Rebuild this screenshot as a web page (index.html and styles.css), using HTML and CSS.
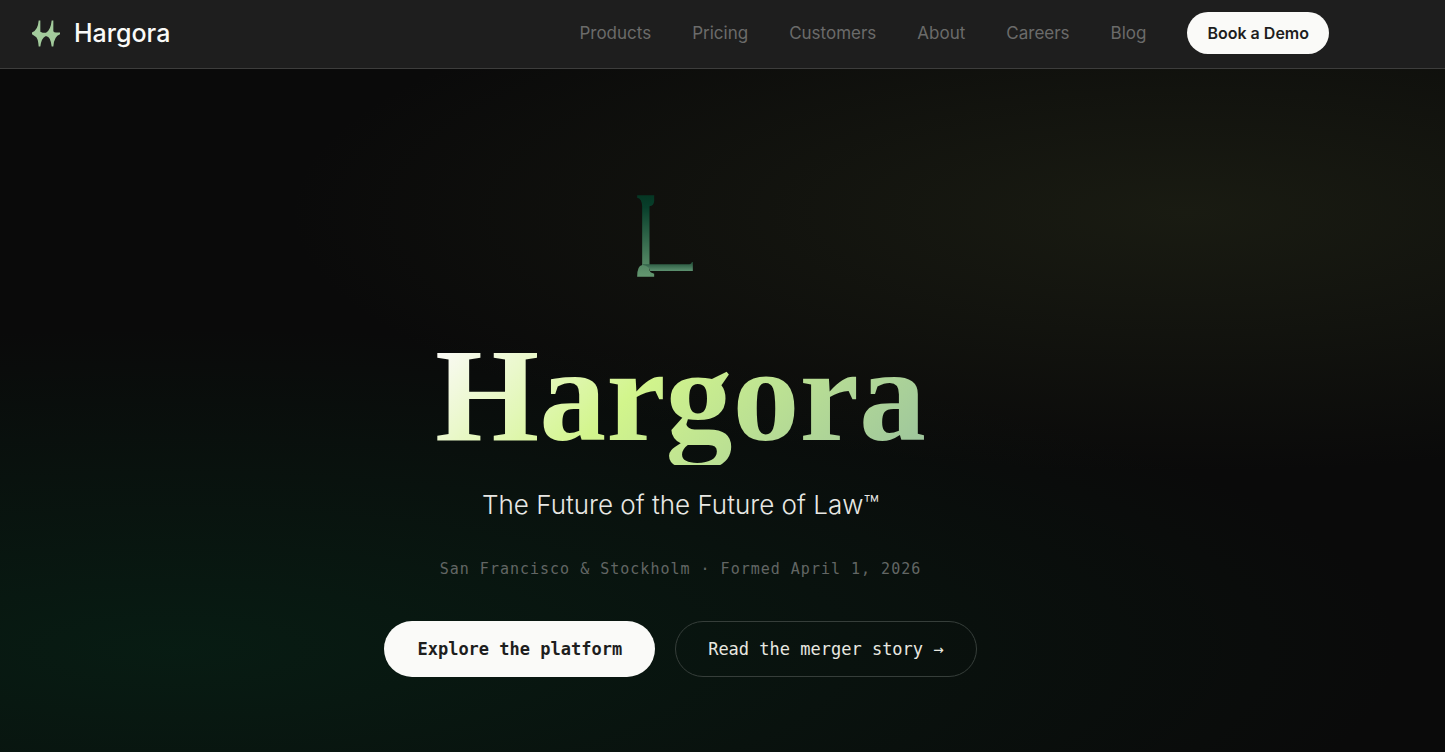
FILE: index.html
```html
<!DOCTYPE html>
<html lang="en">
<head>
    <meta charset="UTF-8">
    <meta name="viewport" content="width=device-width, initial-scale=1.0">
    <title>Hargora</title>
    <link rel="stylesheet" href="styles.css">
</head>
<body>
    <header class="header">
        <div class="header-inner">
            <a href="#" class="brand">
                <svg class="brand-icon" viewBox="0 0 84 80" aria-hidden="true">
                    <path d="M20 1 H25 V35 L32 38 H42 Q56 30 59 1 H64 V33 Q66 37 72 37 H84 V42 Q66 48 64 79 H59 Q56 50 44 48 H40 Q28 54 25 79 H20 Q18 52 10 49 L0 42 V37 Q18 30 20 1 Z"/>
                </svg>
                <span>Hargora</span>
            </a>
            <nav class="nav">
                <a href="#">Products</a>
                <a href="#">Pricing</a>
                <a href="#">Customers</a>
                <a href="#">About</a>
                <a href="#">Careers</a>
                <a href="#">Blog</a>
                <a href="#" class="demo">Book a Demo</a>
            </nav>
        </div>
    </header>

    <main class="hero">
        <div class="hero-inner">
            <svg class="mark" viewBox="111 74 167 246" aria-hidden="true">
                <defs>
                    <linearGradient id="stem" gradientUnits="userSpaceOnUse" x1="0" y1="74" x2="0" y2="320">
                        <stop offset="0" stop-color="#053623"/>
                        <stop offset="0.15" stop-color="#083f2b"/>
                        <stop offset="1" stop-color="#649770"/>
                    </linearGradient>
                    <linearGradient id="bar" gradientUnits="userSpaceOnUse" x1="0" y1="276" x2="0" y2="302">
                        <stop offset="0" stop-color="#23513a"/>
                        <stop offset="1" stop-color="#5d9170"/>
                    </linearGradient>
                </defs>
                <path fill="url(#stem)" d="M111 75 H162 V92 Q161 107 148 108 V300 Q150 308 162 310 V319 H111 Q111 286 126 284 V108 Q125 84 111 82 Z"/>
                <path fill="url(#bar)" d="M128 282 H262 Q275 282 275 275 H278 V302 H150 Q148 288 128 284 Z"/>
            </svg>
            <h1 class="title">Hargora</h1>
            <p class="tagline">The Future of the Future of Law™</p>
            <p class="meta">San Francisco &amp; Stockholm · Formed April 1, 2026</p>
            <div class="actions">
                <a href="#" class="btn btn-light">Explore the platform</a>
                <a href="#" class="btn btn-outline">Read the merger story →</a>
            </div>
        </div>
    </main>
</body>
</html>
```
FILE: styles.css
```css
* {
    box-sizing: border-box;
}

body {
    margin: 0;
    min-height: 100vh;
    display: flex;
    flex-direction: column;
    background: #0a0a0a;
    color: #fafaf8;
    font-family: Inter, sans-serif;
}

a {
    text-decoration: none;
    color: inherit;
}

.header {
    background: #1e1e1e;
    border-bottom: 1px solid #3d3d3c;
}

.header-inner {
    max-width: 1361px;
    padding: 12px 32px 14px;
    display: flex;
    align-items: center;
    justify-content: space-between;
}

.brand {
    display: flex;
    align-items: center;
    gap: 14px;
    font-size: 25px;
    line-height: 32px;
    font-weight: 500;
}

.brand-icon {
    width: 28px;
    height: 27px;
    fill: #a3cb9c;
}

.nav {
    display: flex;
    align-items: center;
    gap: 41px;
    font-size: 17px;
    color: #6b6b6a;
}

.demo {
    padding: 0 20px;
    border-radius: 21px;
    background: #fafaf8;
    color: #1e1e1e;
    font-size: 16px;
    line-height: 42px;
    font-weight: 600;
}

.hero {
    flex: 1;
    background:
        radial-gradient(85% 47% at 12% 85%, rgba(3, 62, 36, 0.34), transparent),
        radial-gradient(62% 38% at 82% 21%, rgba(60, 66, 36, 0.3), transparent),
        #0a0a0a;
}

.hero-inner {
    max-width: 1361px;
    padding: 126px 32px 60px;
    display: flex;
    flex-direction: column;
    align-items: center;
}

.mark {
    width: 56px;
    height: 82px;
    margin-right: 32px;
}

.title {
    margin: 48px 0 24px;
    font-family: "Liberation Serif", serif;
    font-size: 134px;
    line-height: 140px;
    font-weight: 700;
    background: linear-gradient(135deg, #fafaf5 5%, #d2f58c 42%, #9fc79c 95%);
    -webkit-background-clip: text;
    background-clip: text;
    color: transparent;
}

.tagline {
    margin: 0 0 38px;
    font-size: 26px;
    line-height: 32px;
    font-weight: 300;
    color: #e8e8e4;
}

.meta {
    margin: 0 0 42px;
    font-family: "DejaVu Sans Mono", monospace;
    font-size: 15px;
    line-height: 20px;
    letter-spacing: 1px;
    color: #626664;
}

.actions {
    display: flex;
    gap: 20px;
}

.btn {
    padding: 0 32px;
    border: 1px solid transparent;
    border-radius: 28px;
    font-family: "DejaVu Sans Mono", monospace;
    font-size: 17px;
    line-height: 54px;
}

.btn-light {
    background: #fafaf8;
    color: #1e1e1e;
    font-weight: 700;
}

.btn-outline {
    border-color: #363e3a;
    color: #e8e8e0;
}
```
